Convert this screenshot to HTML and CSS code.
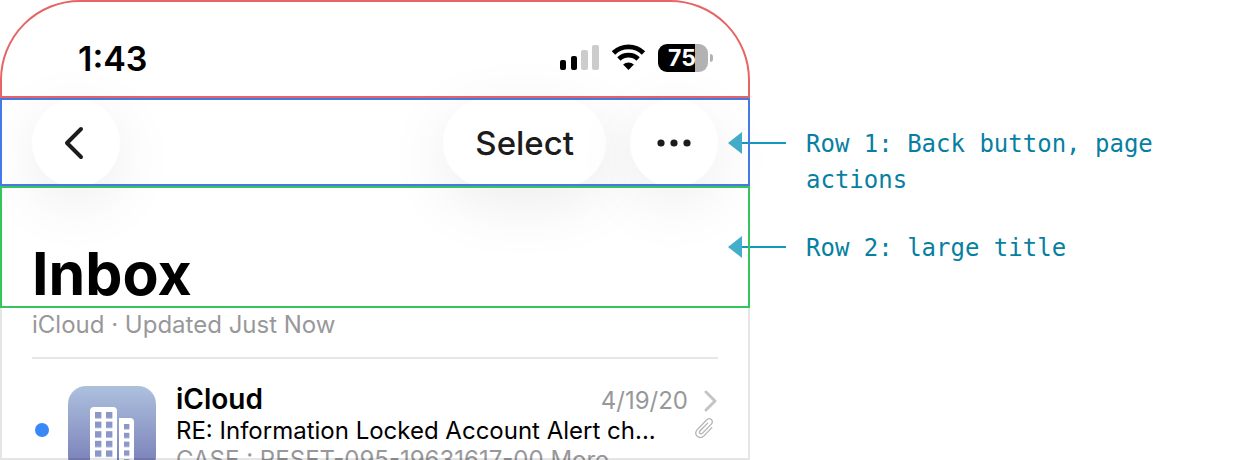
FILE: index.html
```html
<!DOCTYPE html>
<html lang="en">
<head>
	<meta charset="UTF-8">
	<meta name="viewport" content="width=device-width, initial-scale=1">
	<title>Navigation bar rows</title>
	<link rel="stylesheet" href="styles.css">
</head>
<body>
	<div class="phone">
		<div class="status-bar">
			<span class="time">1:43</span>
			<div class="indicators">
				<svg width="40" height="28" viewBox="0 0 40 28">
					<rect x="0" y="16" width="6" height="10" rx="2"/>
					<rect x="11" y="12" width="6" height="14" rx="2"/>
					<rect x="21" y="6" width="7" height="20" rx="2" fill="#ccc"/>
					<rect x="32" y="1" width="7" height="25" rx="2" fill="#ccc"/>
				</svg>
				<svg width="34" height="28" viewBox="0 0 34 28">
					<path d="M1.500 9a21.500 21.500 0 0 1 30 0M6.900 15a14 14 0 0 1 19.200 0" fill="none" stroke="#000" stroke-width="4.800"/>
					<path d="M16.500 26l-5.400-5.400a8 8 0 0 1 10.800 0z"/>
				</svg>
				<div class="battery"><span class="level">75</span></div>
			</div>
		</div>
		<nav class="actions">
			<button class="btn round" type="button" aria-label="Back">
				<svg width="24" height="34" viewBox="0 0 24 34"><path d="M17 3L3 17l14 14" fill="none" stroke="#1c1c1c" stroke-width="4" stroke-linecap="round" stroke-linejoin="round"/></svg>
			</button>
			<button class="btn select" type="button">Select</button>
			<button class="btn round" type="button" aria-label="More">
				<svg width="34" height="8" viewBox="0 0 34 8" fill="#1c1c1c"><circle cx="4" cy="4" r="3.600"/><circle cx="17" cy="4" r="3.600"/><circle cx="30" cy="4" r="3.600"/></svg>
			</button>
		</nav>
		<header class="title">
			<h1>Inbox</h1>
		</header>
		<main class="mailbox">
			<p class="updated">iCloud · Updated Just Now</p>
			<article class="mail">
				<span class="unread"></span>
				<svg class="avatar" width="88" height="88" viewBox="0 0 88 88">
					<defs>
						<linearGradient id="sky" x1="0" y1="0" x2="0" y2="1">
							<stop offset="0" stop-color="#adc1de"/>
							<stop offset="1" stop-color="#7479b4"/>
						</linearGradient>
						<pattern id="panes" x="27" y="26" width="11" height="9.600" patternUnits="userSpaceOnUse">
							<rect width="6.400" height="6.400" fill="#8b97c8"/>
						</pattern>
						<pattern id="panes-small" x="56" y="38" width="11" height="8.800" patternUnits="userSpaceOnUse">
							<rect width="5.400" height="5.400" fill="#8b97c8"/>
						</pattern>
					</defs>
					<rect width="88" height="88" rx="18" fill="url(#sky)"/>
					<path d="M22 78V25q0-4 4-4h19q4 0 4 4v53zM51 78V32h11q4 0 4 4v42z" fill="#fff"/>
					<rect x="27" y="26" width="18" height="48" fill="url(#panes)"/>
					<rect x="56" y="38" width="6" height="36" fill="url(#panes-small)"/>
				</svg>
				<div class="summary">
					<h2>iCloud</h2>
					<p class="subject">RE: Information Locked Account Alert ch...</p>
					<p class="preview">CASE : RESET-095-19631617-00 More</p>
				</div>
				<div class="meta">
					<time datetime="2020-04-19">4/19/20</time>
					<svg width="14" height="22" viewBox="0 0 14 22"><path d="M2 2l9 9-9 9" fill="none" stroke="#c4c4c6" stroke-width="3" stroke-linecap="round" stroke-linejoin="round"/></svg>
					<svg class="clip" width="20" height="22" viewBox="0 0 20 22"><path d="M17.800 10.600l-7.600 8c-2 2-4.800 2.500-7 .7-2-1.800-2-4.500 0-6.700L12.600 3c1.500-1.500 3.300-1.700 4.700-.5s1.400 3 0 4.600l-8.700 9c-.8.9-1.800 1-2.600.3s-.7-1.700.1-2.600l7.600-7.700" fill="none" stroke="#b4b4b6" stroke-width="1.300" stroke-linecap="round"/></svg>
				</div>
			</article>
		</main>
	</div>
	<aside class="notes">
		<p class="note">
			<svg width="58" height="22" viewBox="0 0 58 22"><path d="M14 11h44" stroke="#1399bb" stroke-width="2"/><path d="M0 11L14 0v22z" fill="#42aecb"/></svg>
			<span>Row 1: Back button, page actions</span>
		</p>
		<p class="note">
			<svg width="58" height="22" viewBox="0 0 58 22"><path d="M14 11h44" stroke="#1399bb" stroke-width="2"/><path d="M0 11L14 0v22z" fill="#42aecb"/></svg>
			<span>Row 2: large title</span>
		</p>
	</aside>
</body>
</html>
```
FILE: styles.css
```css
:root {
	--status: #e66465;
	--row-1: #4579e6;
	--row-2: #36c45c;
	--frame: rgba(0, 0, 0, .1);
	--note: #077fa2;
	--muted: #98989b;
}
* {
	box-sizing: border-box;
}
body {
	background: #fff;
	font-family: Inter, "Liberation Sans", sans-serif;
	margin: 0;
	height: 100vh;
	overflow: hidden;
	display: flex;
}
h1, h2, p {
	margin: 0;
}
svg {
	flex: none;
}

/* phone */
.phone {
	position: relative;
	z-index: 1;
	flex: 0 1 750px;
	min-width: 0;
	display: flex;
	flex-direction: column;
}
.status-bar, .actions, .title {
	outline: 2px solid var(--status);
	outline-offset: -2px;
	display: flex;
	align-items: center;
	padding: 0 32px;
	flex: none;
}
.status-bar {
	border-radius: 80px 80px 0 0;
	justify-content: space-between;
	height: 98px;
	padding: 18px 38px 0 78px;
}
.time {
	font-size: 34px;
	font-weight: 600;
}
.indicators {
	display: flex;
	align-items: center;
	gap: 12px;
}
.battery {
	background: linear-gradient(90deg, #000 37px, #b2b2b2 37px);
	border-radius: 9px;
	color: #fff;
	font-size: 23px;
	font-weight: 700;
	line-height: 28px;
	width: 50px;
	height: 28px;
	margin-right: 4px;
	padding-right: 2px;
	text-align: center;
	position: relative;
}
.battery::after {
	content: "";
	background: #b2b2b2;
	border-radius: 0 4px 4px 0;
	position: absolute;
	left: 52px;
	top: 10px;
	width: 3px;
	height: 8px;
}
.actions {
	outline-color: var(--row-1);
	gap: 24px;
	height: 88px;
	padding-top: 2px;
}
.btn {
	background: #fff;
	border: 0;
	border-radius: 44px;
	box-shadow: 0 16px 64px rgba(0, 0, 0, .08);
	color: #1c1c1c;
	font: 500 33px Inter, "Liberation Sans", sans-serif;
	height: 88px;
	padding: 0 32px;
	display: grid;
	place-items: center;
}
.round {
	width: 88px;
	padding: 0;
}
.select {
	margin-left: auto;
}
.title {
	outline-color: var(--row-2);
	align-items: flex-end;
	height: 122px;
	padding-bottom: 4px;
}
h1 {
	font-size: 59px;
	font-weight: 700;
	line-height: 60px;
}

/* message list */
.mailbox {
	flex: 1;
	min-height: 0;
	overflow: hidden;
	padding: 0 32px;
	position: relative;
}
.mailbox::after {
	content: "";
	border: 2px solid var(--frame);
	border-top: 0;
	position: absolute;
	inset: 0;
}
.updated {
	border-bottom: 2px solid #e6e6e7;
	color: var(--muted);
	font-size: 24px;
	line-height: 33px;
	padding-bottom: 16px;
}
.mail {
	display: flex;
	padding-top: 25px;
}
.unread {
	background: #3a87f7;
	border-radius: 50%;
	width: 14px;
	height: 14px;
	margin: 39px 19px 0 3px;
	flex: none;
}
.avatar {
	margin: 2px 20px 0 0;
}
.summary {
	flex: 1;
	min-width: 0;
	line-height: 31px;
	white-space: nowrap;
}
h2 {
	font-size: 28px;
	font-weight: 600;
	line-height: 31px;
}
.subject, .preview {
	font-size: 24px;
}
.preview {
	color: var(--muted);
	line-height: 27px;
}
.meta {
	color: var(--muted);
	font-size: 24px;
	line-height: 34px;
	display: grid;
	grid-template-columns: auto 14px;
	grid-auto-rows: 34px 20px;
	align-items: center;
	align-content: start;
	column-gap: 16px;
}
.clip {
	grid-column: 1 / -1;
	justify-self: end;
	margin-right: 4px;
}

/* annotations */
.notes {
	flex: 1;
	margin-left: -22px;
	padding-top: 126px;
}
.note {
	color: var(--note);
	font: 24px/36px "DejaVu Sans Mono", monospace;
	display: flex;
	gap: 20px;
	max-width: 440px;
	margin-bottom: 32px;
}
.note svg {
	margin-top: 6px;
}
```
